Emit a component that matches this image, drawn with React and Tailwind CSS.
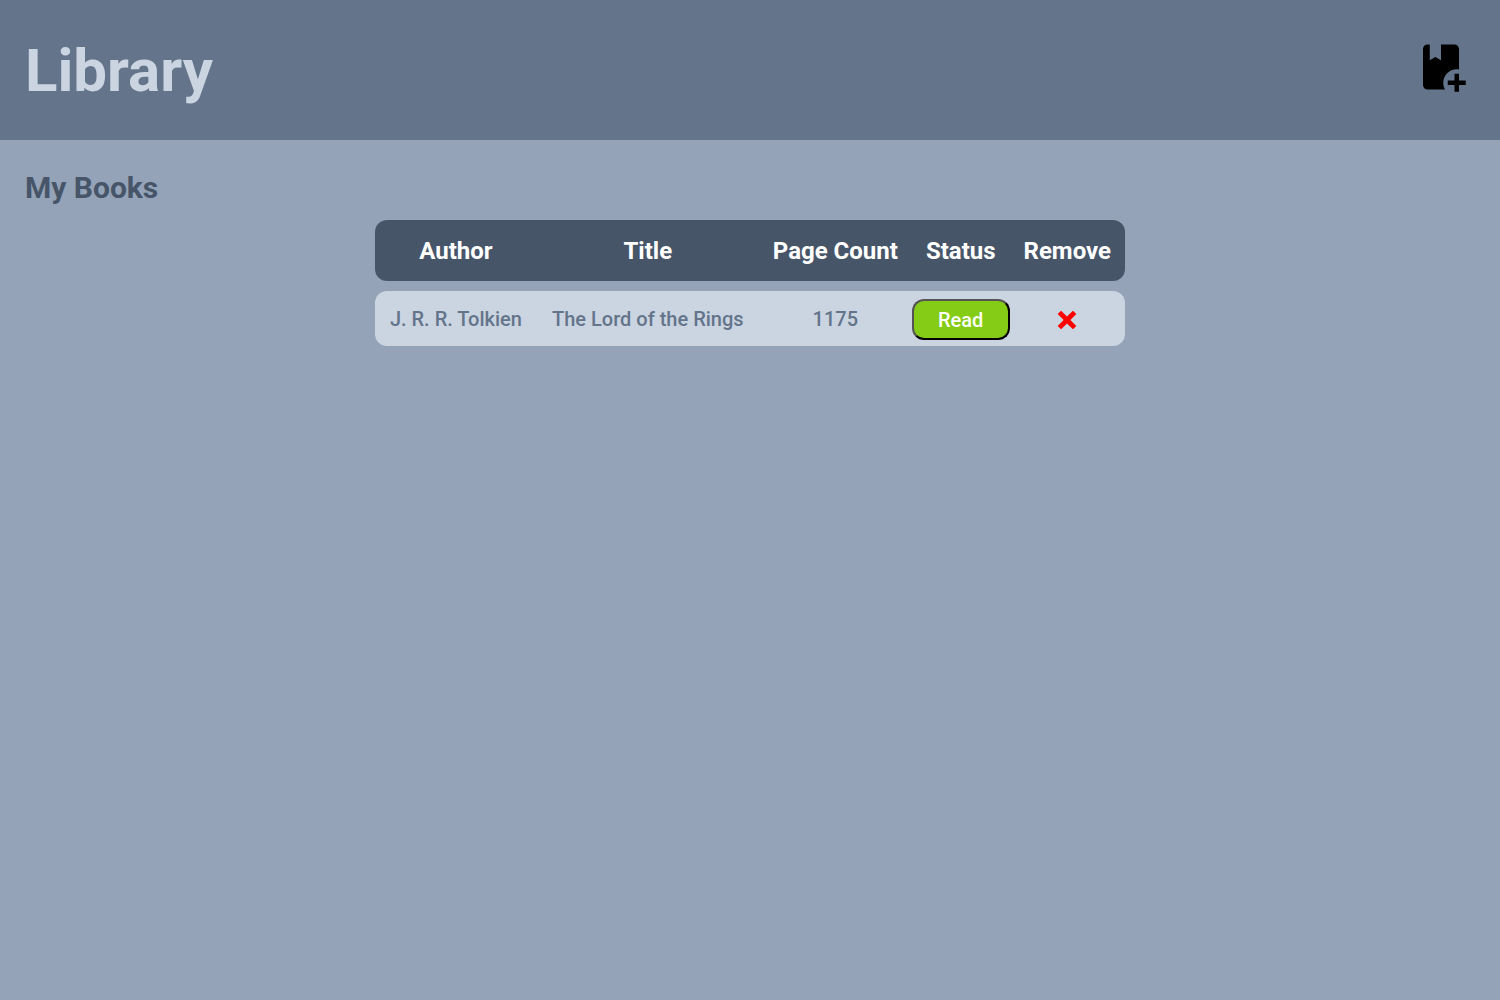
const books = [
  { author: "J. R. R. Tolkien", title: "The Lord of the Rings", pages: 1175 },
];

export default function App() {
  return (
    <div className="min-h-screen bg-[#94a3b8] font-['Roboto',sans-serif]">
      <header className="flex h-[140px] items-center justify-between bg-[#64748b] px-[25px]">
        <h1 className="text-[60px] leading-[normal] font-bold text-[#cbd5e1]">Library</h1>
        <button type="button" aria-label="Add book" className="mr-[7px] pb-[6px]">
          <svg viewBox="0 0 24 24" className="size-[54px]" fill="#000">
            <path d="M13 19c0 1.100.3 2.120.81 3H6c-1.110 0-2-.89-2-2V4c0-1.110.89-2 2-2h1v7l2.500-1.500L12 9V2h6c1.100 0 2 .89 2 2v9.090c-.33-.05-.66-.09-1-.09-3.310 0-6 2.690-6 6m7-1v-3h-2v3h-3v2h3v3h2v-3h3v-2h-3Z" />
          </svg>
        </button>
      </header>
      <main>
        <h2 className="px-[25px] pt-[25px] text-[30px] leading-[45px] font-bold text-[#475569]">My Books</h2>
        <table className="mx-auto w-1/2 border-separate border-spacing-x-0 border-spacing-y-[10px] text-center">
          <thead>
            <tr className="h-[61px] bg-[#475569] text-[24px] font-bold text-white">
              <th className="rounded-l-[12px] px-[14px]">Author</th>
              <th className="px-[14px]">Title</th>
              <th className="w-px px-[14px] whitespace-nowrap">Page Count</th>
              <th className="w-px px-[14px]">Status</th>
              <th className="w-px rounded-r-[12px] px-[14px]">Remove</th>
            </tr>
          </thead>
          <tbody>
            {books.map((book) => (
              <tr key={book.title} className="h-[55px] bg-[#cbd5e1] text-[20px] font-medium text-[#64748b]">
                <td className="rounded-l-[12px] px-[14px]">{book.author}</td>
                <td className="px-[14px]">{book.title}</td>
                <td className="px-[14px]">{book.pages}</td>
                <td className="pt-[2px]">
                  <button type="button" className="block h-[41px] w-full rounded-[12px] border-2 border-black bg-[#84cc16] text-white [border-style:outset]">Read</button>
                </td>
                <td className="rounded-r-[12px]">
                  <button type="button" aria-label="Remove book" className="align-middle">
                    <svg viewBox="0 0 24 24" className="size-7" fill="#f00">
                      <path d="M20 6.910 17.090 4 12 9.090 6.910 4 4 6.910 9.090 12 4 17.090 6.910 20 12 14.910 17.090 20 20 17.090 14.910 12Z" />
                    </svg>
                  </button>
                </td>
              </tr>
            ))}
          </tbody>
        </table>
      </main>
    </div>
  );
}
